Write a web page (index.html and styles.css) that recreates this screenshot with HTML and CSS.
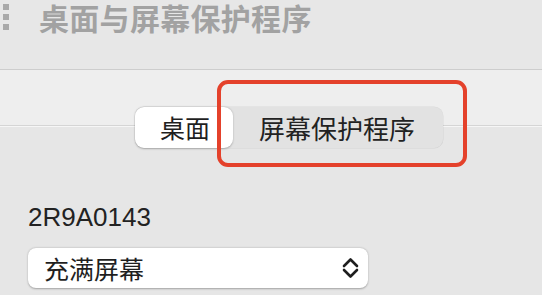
FILE: index.html
```html
<!DOCTYPE html>
<html lang="zh">
<head>
<meta charset="utf-8">
<link rel="stylesheet" href="styles.css">
</head>
<body>
<div class="window">
  <header class="header">
    <div class="dots"><span></span><span></span><span></span></div>
    <h1 class="title">桌面与屏幕保护程序</h1>
  </header>
  <main class="main">
    <div class="tabrow">
      <div class="segmented">
        <div class="seg seg-on">桌面</div>
        <div class="seg seg-off">屏幕保护程序</div>
      </div>
    </div>
    <section class="tabbox">
      <div class="label">2R9A0143</div>
      <div class="select">
        <span class="select-text">充满屏幕</span>
        <svg class="chev" width="19" height="22" viewBox="0 0 19 22"><path d="M3 9 L9.5 2.5 L16 9 M3 13 L9.5 19.5 L16 13" fill="none" stroke="#1e1e1e" stroke-width="2.6" stroke-linecap="round" stroke-linejoin="round"/></svg>
      </div>
    </section>
  </main>
  <div class="highlight"></div>
</div>
</body>
</html>
```
FILE: styles.css
```css
* { box-sizing: border-box; }
html, body { margin: 0; padding: 0; }
body {
  width: 542px;
  height: 295px;
  overflow: hidden;
  font-family: "PingFang SC", "Noto Sans CJK SC", "Noto Sans", sans-serif;
  color: #1f1f1f;
  background: #eeeeee;
}
.window { position: relative; width: 542px; height: 295px; }
.header {
  height: 70px;
  background: #e7e7e7;
  border-bottom: 1px solid #cdcdcd;
  display: flex;
  align-items: flex-start;
}
.dots {
  display: flex;
  flex-direction: column;
  gap: 4px;
  padding: 4px 0 0 3px;
  width: 39px;
}
.dots span { display: block; width: 6px; height: 6px; background: #a9a9a9; }
.title {
  margin: 0;
  font-size: 30px;
  line-height: 34px;
  font-weight: 700;
  color: #a2a2a2;
  letter-spacing: 0.3px;
}
.main { background: #eeeeee; height: 225px; }
.tabrow { padding: 37px 0 0 135px; position: relative; z-index: 1; }
.segmented {
  display: flex;
  width: 308px;
  height: 41px;
  background: #e2e2e2;
  border-radius: 9px;
  box-shadow: 0 0 0 0.5px rgba(0,0,0,0.08);
}
.seg {
  display: flex;
  align-items: center;
  justify-content: center;
  font-size: 25px;
  line-height: 1;
}
.seg-on {
  width: 98px;
  background: #ffffff;
  border-radius: 9px;
  box-shadow: 0 0.5px 2px rgba(0,0,0,0.25);
  padding-left: 2px;
}
.seg-off { flex: 1; padding-right: 2px; color: #222; font-size: 26px; }
.tabbox {
  margin-top: -23px;
  height: 170px;
  background: #e6e6e6;
  border-top: 1px solid #d5d5d5;
  box-shadow: inset 0 1px 0 #f6f6f6;
  padding: 76px 0 0 28px;
}
.label {
  font-family: "Liberation Sans", "Noto Sans", sans-serif;
  font-size: 26px;
  line-height: 30px;
  color: #222;
}
.select {
  margin-top: 16px;
  width: 340px;
  height: 40px;
  background: #ffffff;
  border-radius: 8px;
  box-shadow: 0 0.5px 2px rgba(0,0,0,0.3);
  display: flex;
  align-items: center;
  justify-content: space-between;
  padding: 0 8px 0 16px;
}
.select-text { font-size: 25px; line-height: 1; }
.chev { display: block; }
.highlight {
  position: absolute;
  left: 217px;
  top: 80px;
  width: 250px;
  height: 87px;
  border: 4.5px solid #e4412b;
  border-radius: 11px;
  z-index: 2;
}
```
